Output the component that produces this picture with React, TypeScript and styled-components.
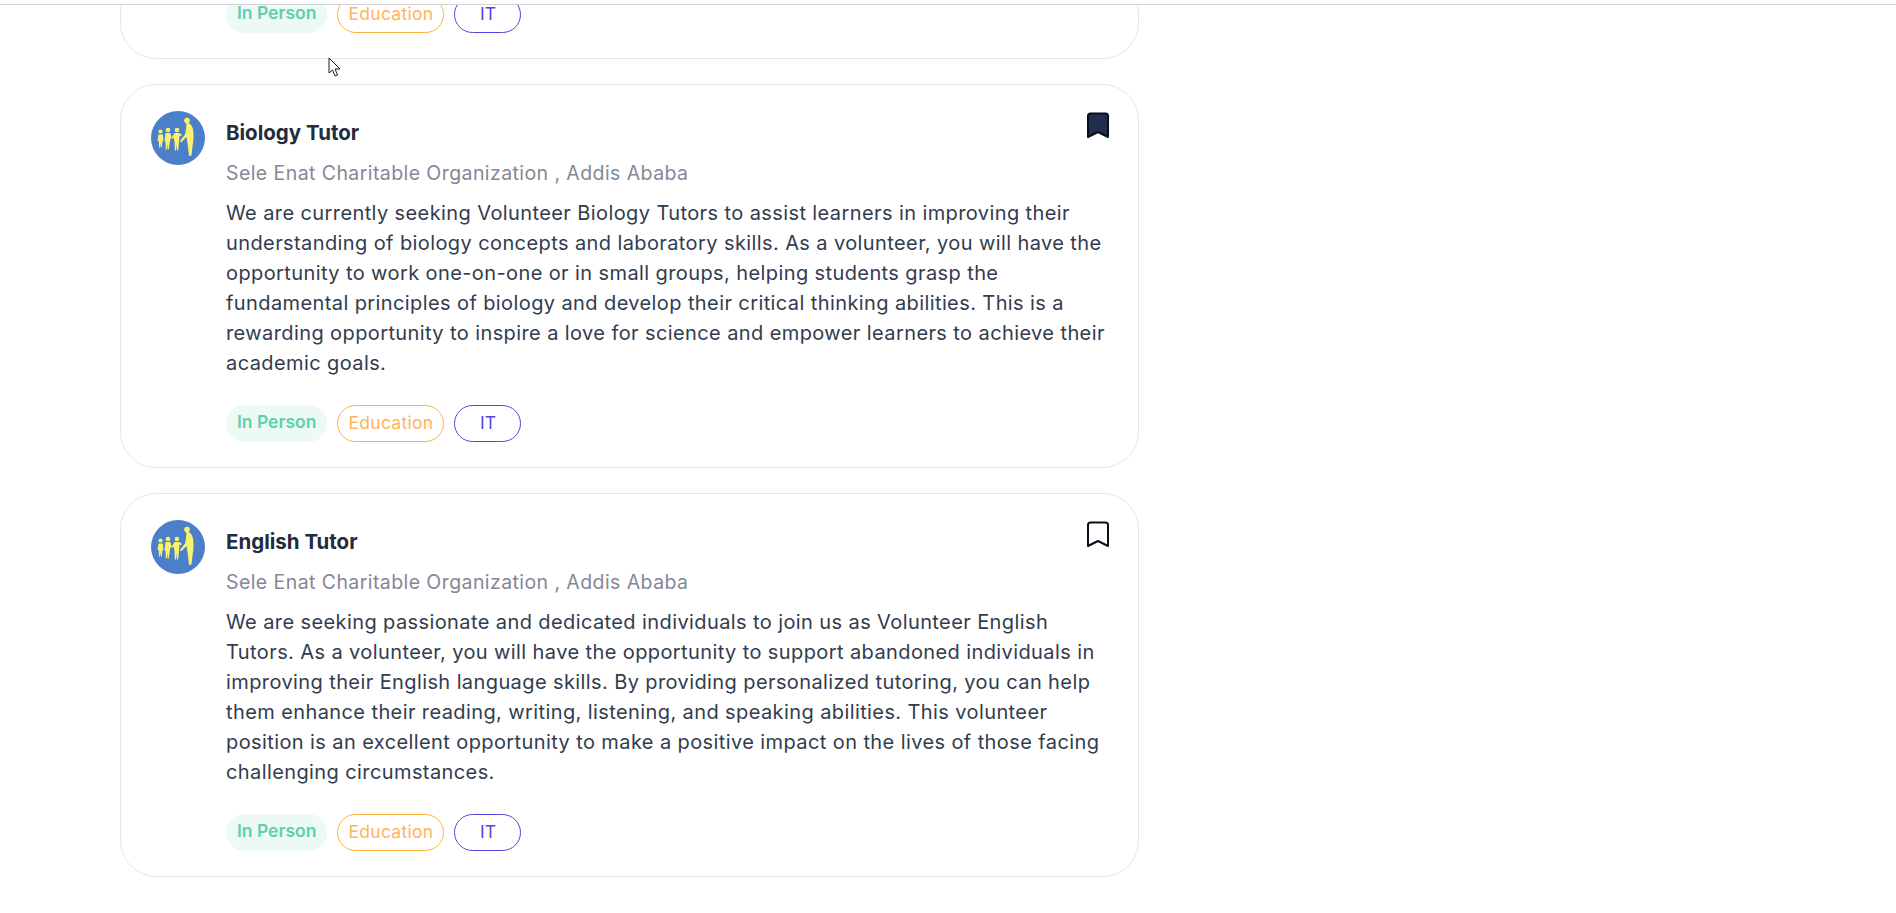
import React from "react";
import styled, { createGlobalStyle } from "styled-components";

const GlobalStyle = createGlobalStyle`
  html, body {
    margin: 0;
    padding: 0;
    background: #fff;
    overflow: hidden;
  }
  body {
    font-family: "Inter", "Liberation Sans", sans-serif;
  }
`;

const Page = styled.div`
  position: relative;
  height: 913px;
  overflow: hidden;
  display: flex;
  flex-direction: column;
`;

const TopBar = styled.div`
  height: 4px;
  flex: none;
  background: #fff;
  border-bottom: 1px solid #d4d4d8;
`;

const Viewport = styled.div`
  flex: 1;
  min-height: 0;
  overflow: hidden;
`;

const List = styled.div`
  width: 1019px;
  margin-left: 120px;
  margin-top: -30px;
  display: flex;
  flex-direction: column;
  gap: 25px;
`;

const Card = styled.article`
  box-sizing: border-box;
  height: 384px;
  border: 1px solid #e5e7eb;
  border-radius: 36px;
  padding: 26px 24px 26px 30px;
  display: flex;
  gap: 21px;
`;

const ClippedCard = styled(Card)`
  height: 84px;
  padding: 0 24px 25px 105px;
  align-items: flex-end;
`;

const Avatar = styled.svg`
  width: 54px;
  height: 54px;
  flex: none;
`;

const Body = styled.div`
  flex: 1;
  min-width: 0;
`;

const Head = styled.div`
  display: flex;
  justify-content: space-between;
  align-items: flex-start;
`;

const Title = styled.h3`
  margin: 7px 0 0;
  font-size: 20.5px;
  line-height: 30px;
  font-weight: 650;
  color: #232c3d;
`;

const BookmarkButton = styled.button`
  border: 0;
  background: none;
  padding: 0;
  margin: 1px 4px 0 0;
  display: flex;
  color: #1f2f4d;
`;

const Org = styled.p`
  margin: 10px 0 0;
  font-size: 19.5px;
  letter-spacing: 0.42px;
  line-height: 30px;
  color: #858796;
`;

const Description = styled.p`
  margin: 10px 0 0;
  font-size: 20px;
  letter-spacing: 0.4px;
  line-height: 30px;
  color: #323c4e;
`;

const Tags = styled.div`
  display: flex;
  gap: 10px;
  margin-top: 27px;
`;

const tagColors = {
  mode: { border: "#ecf9f5", bg: "#ecf9f5", text: "#5fcfad", pad: "10px", lift: "5px" },
  category: { border: "#ffb33e", bg: "#fff", text: "#ffb35c", pad: "10px", lift: "3px" },
  skill: { border: "#4f46e5", bg: "#fff", text: "#4f46e5", pad: "24.500px", lift: "3px" },
};

const Tag = styled.span<{ $kind: keyof typeof tagColors }>`
  box-sizing: border-box;
  height: 37px;
  padding: 0 ${(p) => tagColors[p.$kind].pad} ${(p) => tagColors[p.$kind].lift};
  display: flex;
  align-items: center;
  border-radius: 19px;
  font-size: 17.5px;
  letter-spacing: ${(p) => (p.$kind === "category" ? "0.3px" : "0")};
  font-weight: ${(p) => (p.$kind === "mode" ? 600 : 400)};
  border: 1px solid ${(p) => tagColors[p.$kind].border};
  background: ${(p) => tagColors[p.$kind].bg};
  color: ${(p) => tagColors[p.$kind].text};
`;

const Cursor = styled.svg`
  position: absolute;
  left: 328px;
  top: 57px;
  width: 13px;
  height: 20px;
`;

const Logo = () => (
  <Avatar viewBox="0 0 54 54">
    <circle cx="27" cy="27" r="27" fill="#4b7fc9" />
    <g fill="#f8f26e">
      {/* woman */}
      <circle cx="36" cy="9.500" r="2.800" />
      <path d="M34.500 12.500c3.500-1.500 6.500 1 7.500 6 1 6 .5 12-.5 17l-1 9-2.500.5-1-9-1.500-10-5.500 5.500-1-1.500 5-6.500c1-3.500 1-7 1.500-10.500z" />
      {/* children, tallest next to her */}
      <circle cx="26" cy="19" r="2.300" />
      <path d="M23.500 22h5l2.500 2-1 1-1.500-.5-.5 7-.8 8h-1.200l-.5-6-.5 6h-1.200l-.3-8-.8-5-1.500 1.500-.7-1z" />
      <circle cx="17" cy="19" r="2.300" />
      <path d="M14.500 22h5l1 5-1.200 1-.6 4-.9 6.500h-1.100l-.3-6-.5 6h-1.100l-.2-7-1-1.500z" />
      <circle cx="9.500" cy="20.500" r="2.100" />
      <path d="M7.500 23.500h4.500l.5 6-1 1-.7 6h-1l-.3-5-.5 5h-1l-.2-6-1.300-1z" />
    </g>
  </Avatar>
);

const Bookmark = ({ filled }: { filled?: boolean }) => (
  <BookmarkButton aria-label="bookmark">
    <svg width="24" height="27" viewBox="0 0 24 27">
      <path
        d="M2 4c0-1.500 1-2.500 2.500-2.500h15c1.500 0 2.500 1 2.500 2.500v21l-10-5-10 5z"
        fill={filled ? "currentColor" : "none"}
        stroke="#0b0f19"
        strokeWidth="2"
        strokeLinejoin="round"
      />
    </svg>
  </BookmarkButton>
);

const TagRow = () => (
  <Tags>
    <Tag $kind="mode">In Person</Tag>
    <Tag $kind="category">Education</Tag>
    <Tag $kind="skill">IT</Tag>
  </Tags>
);

const jobs = [
  {
    title: "Biology Tutor",
    saved: true,
    lines: [
      "We are currently seeking Volunteer Biology Tutors to assist learners in improving their",
      "understanding of biology concepts and laboratory skills. As a volunteer, you will have the",
      "opportunity to work one-on-one or in small groups, helping students grasp the",
      "fundamental principles of biology and develop their critical thinking abilities. This is a",
      "rewarding opportunity to inspire a love for science and empower learners to achieve their",
      "academic goals.",
    ],
  },
  {
    title: "English Tutor",
    saved: false,
    lines: [
      "We are seeking passionate and dedicated individuals to join us as Volunteer English",
      "Tutors. As a volunteer, you will have the opportunity to support abandoned individuals in",
      "improving their English language skills. By providing personalized tutoring, you can help",
      "them enhance their reading, writing, listening, and speaking abilities. This volunteer",
      "position is an excellent opportunity to make a positive impact on the lives of those facing",
      "challenging circumstances.",
    ],
  },
];

export default function App() {
  return (
    <Page>
      <GlobalStyle />
      <TopBar />
      <Viewport>
        <List>
          <ClippedCard>
            <TagRow />
          </ClippedCard>
          {jobs.map((job) => (
            <Card key={job.title}>
              <Logo />
              <Body>
                <Head>
                  <Title>{job.title}</Title>
                  <Bookmark filled={job.saved} />
                </Head>
                <Org>Sele Enat Charitable Organization , Addis Ababa</Org>
                <Description>
                  {job.lines.map((line) => (
                    <React.Fragment key={line}>
                      {line}
                      <br />
                    </React.Fragment>
                  ))}
                </Description>
                <TagRow />
              </Body>
            </Card>
          ))}
        </List>
      </Viewport>
      <Cursor viewBox="0 0 13 20">
        <path
          d="M1 1v15l3.500-3 2.500 6 2.500-1-2.500-6h5z"
          fill="#fff"
          stroke="#1a1a2e"
          strokeWidth="1"
        />
      </Cursor>
    </Page>
  );
}
